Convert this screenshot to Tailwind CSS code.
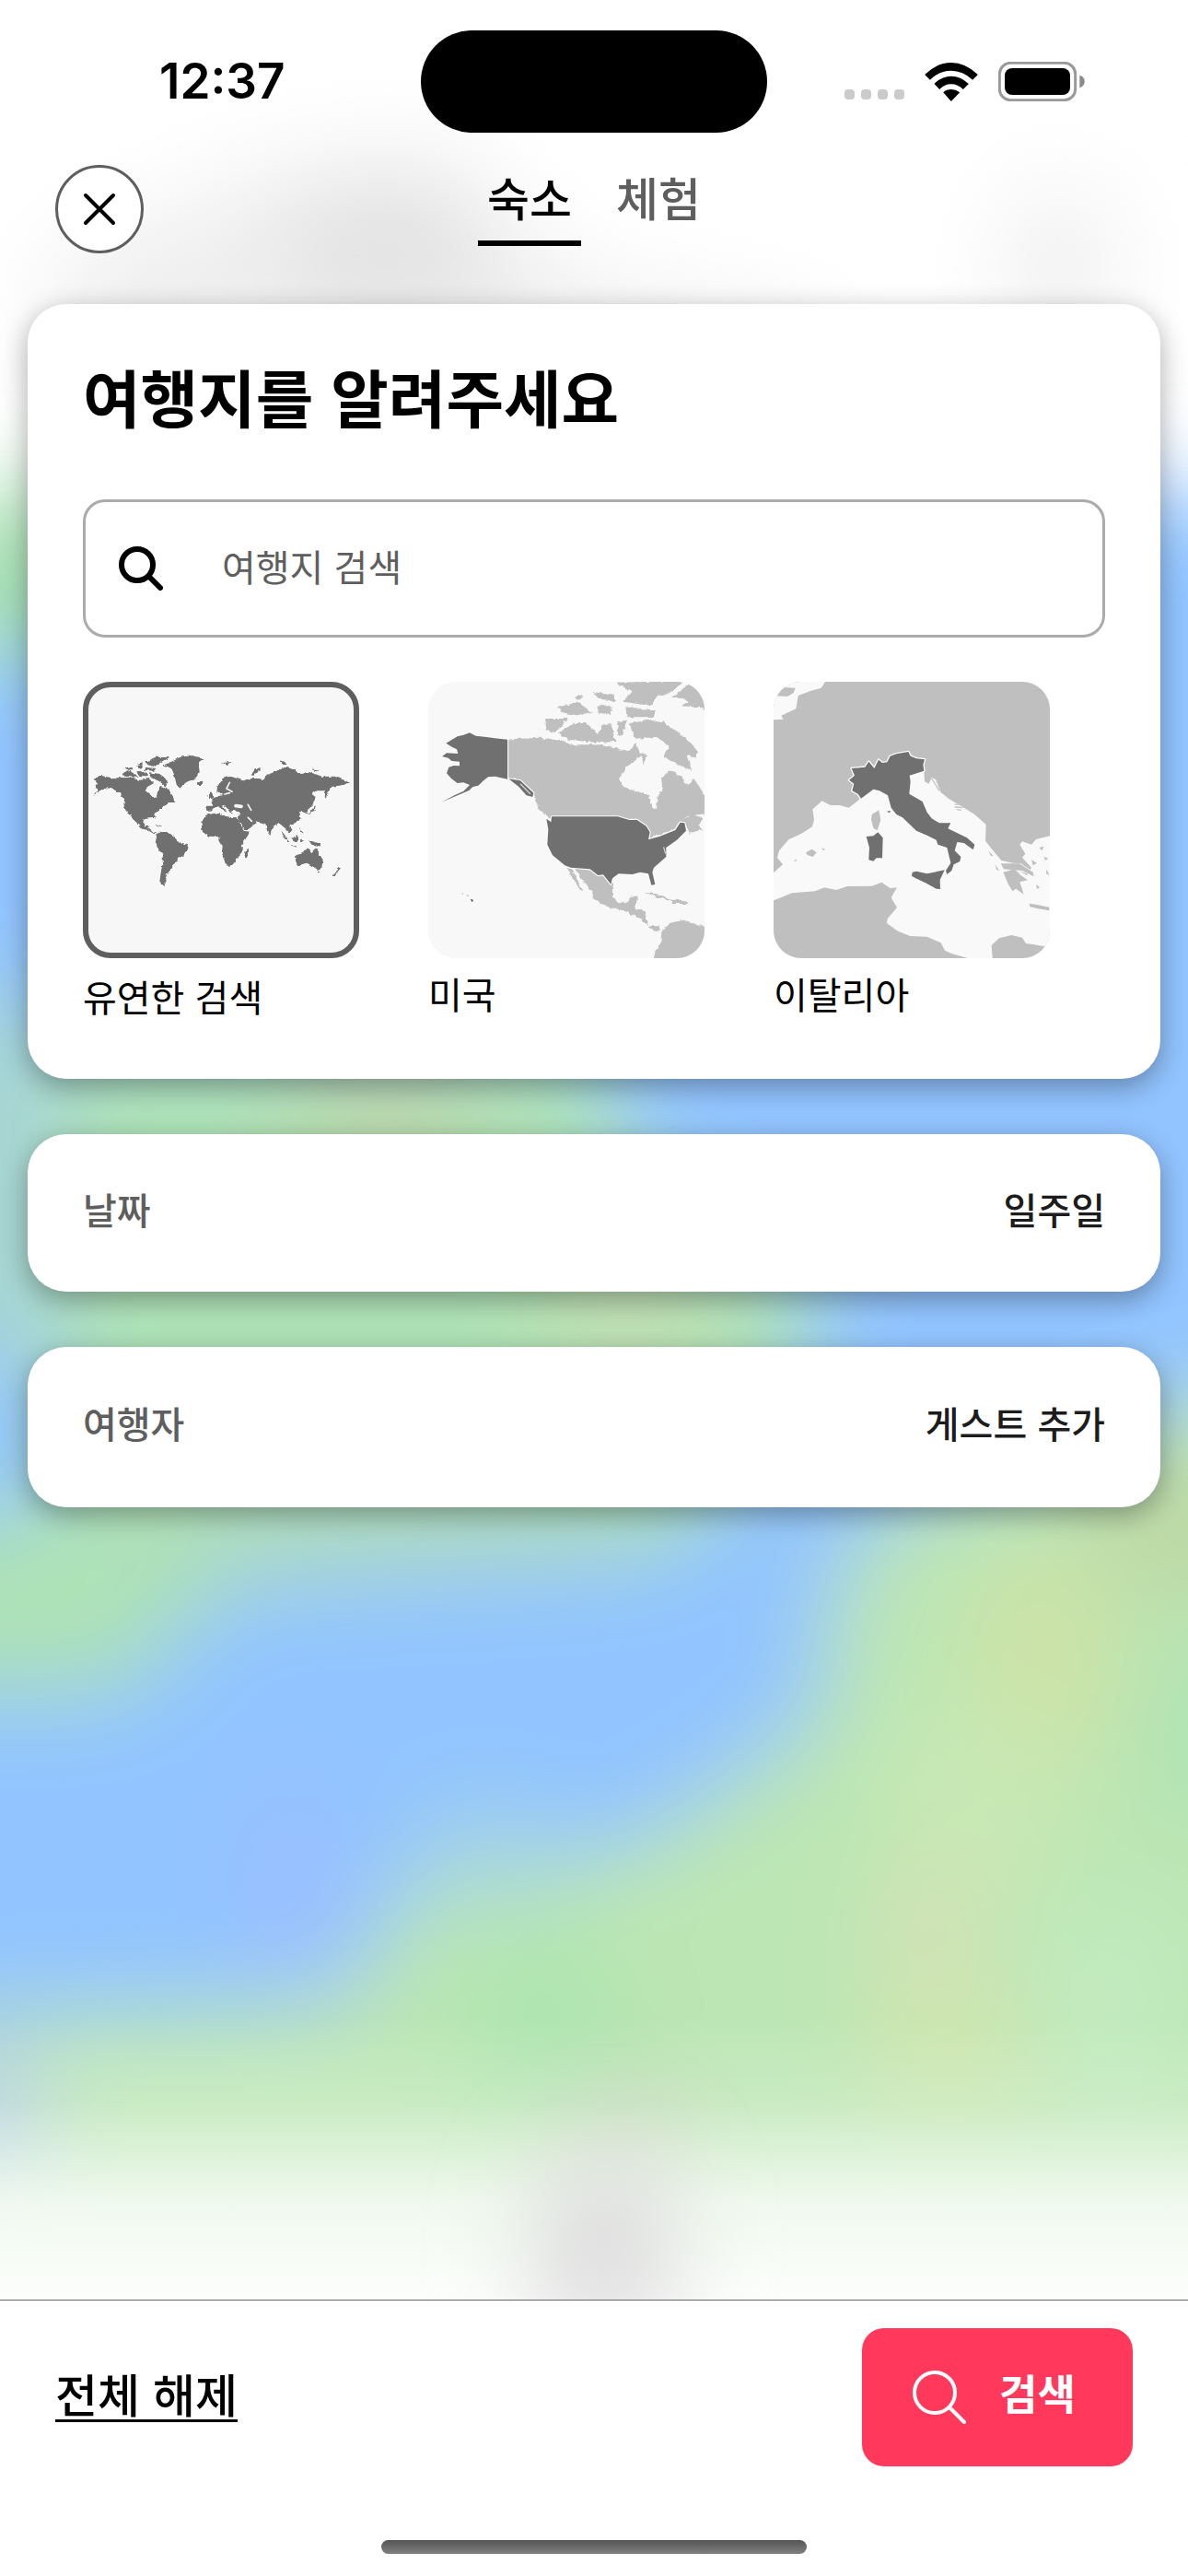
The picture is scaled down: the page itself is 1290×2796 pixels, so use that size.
<!DOCTYPE html>
<html lang="ko">
<head>
<meta charset="utf-8">
<meta name="viewport" content="width=device-width, initial-scale=1">
<title>여행지 검색</title>
<script src="https://cdn.jsdelivr.net/npm/@tailwindcss/browser@4"></script>
</head>
<body class="bg-white font-['Noto_Sans_CJK_KR',sans-serif] text-black">
<div class="relative isolate flex min-h-screen flex-col overflow-hidden">

  <!-- Blurred map backdrop -->
  <svg class="absolute inset-0 -z-10 h-full w-full" viewBox="0 0 1290 2796" preserveAspectRatio="none" aria-hidden="true">
    <defs>
      <filter id="soft" x="-20%" y="-20%" width="140%" height="140%"><feGaussianBlur stdDeviation="50"/></filter>
      <linearGradient id="fade" x1="0" y1="0" x2="0" y2="1">
        <stop offset="0" stop-color="#fff" stop-opacity="0"/>
        <stop offset=".3" stop-color="#fff" stop-opacity=".2"/>
        <stop offset=".65" stop-color="#fff" stop-opacity=".78"/>
        <stop offset="1" stop-color="#fff" stop-opacity=".97"/>
      </linearGradient>
    </defs>
    <rect width="1290" height="2796" fill="#fff"/>
    <g filter="url(#soft)">
      <rect x="-200" y="535" width="1690" height="2100" fill="#92c4ff"/>
      <path fill="#a8e0b4" d="M-200 535H200V715H-200Z"/>
      <path fill="#aee2b6" d="M70 1120H640L700 1280L880 1370L885 1480L760 1660L700 1690L250 1720L130 1840H-200V1700L60 1620L70 1500L-60 1460V1380L60 1340Z"/>
      <path fill="#a6d4d6" d="M-120 1080H70V1480H-120Z"/>
      <path fill="#bce6b4" d="M1490 1490L1250 1530L960 1640L900 1720L890 1860L760 1960L650 2020L560 1990L480 1990L430 2080L370 2170L180 2180L-200 2190V2700H1490Z"/>
      <ellipse cx="530" cy="2010" rx="80" ry="50" fill="#a4d4e4"/>
      <ellipse cx="420" cy="1210" rx="110" ry="90" fill="#bad8ac"/>
      <ellipse cx="680" cy="1430" rx="100" ry="60" fill="#c4deb2"/>
      <ellipse cx="420" cy="1650" rx="280" ry="45" fill="#b0dabf"/>
      <ellipse cx="1130" cy="1810" rx="80" ry="130" fill="#cee2a6"/>
      <ellipse cx="1290" cy="1650" rx="110" ry="90" fill="#bcd8a4"/>
      <ellipse cx="1310" cy="1880" rx="60" ry="90" fill="#ace2b4"/>
      <ellipse cx="1060" cy="1960" rx="100" ry="120" fill="#c8e8b4"/>
      <ellipse cx="1010" cy="2110" rx="60" ry="80" fill="#d6e0b8"/>
      <ellipse cx="1030" cy="2220" rx="90" ry="80" fill="#cee6ae"/>
      <ellipse cx="1210" cy="2170" rx="80" ry="110" fill="#c2ebc0"/>
      <ellipse cx="590" cy="2190" rx="90" ry="100" fill="#aee5b0"/>
      <ellipse cx="320" cy="2050" rx="60" ry="120" fill="#9ac0ff"/>
      <ellipse cx="-30" cy="2300" rx="80" ry="90" fill="#b0cce0"/>
      <ellipse cx="680" cy="2330" rx="70" ry="80" fill="#bfd6b4"/>
    </g>
    <rect y="2190" width="1290" height="310" fill="url(#fade)"/>
    <g filter="url(#soft)">
      <path fill="#efefef" d="M60 280L300 180L480 160L560 250L620 300L900 360V420H60Z"/>
      <ellipse cx="420" cy="270" rx="120" ry="70" fill="#e2e2e2"/>
      <ellipse cx="1150" cy="290" rx="60" ry="90" fill="#f0f0f0"/>
      <ellipse cx="655" cy="2440" rx="80" ry="110" fill="#dedede"/>
    </g>
  </svg>

  <!-- Status bar -->
  <div class="grid grid-cols-[1fr_376px_1fr] items-center pt-[33px]">
    <div class="pl-[173px] font-['Inter',sans-serif] text-[53px] leading-none font-semibold">12:37</div>
    <div class="h-[111px] rounded-full bg-black"></div>
    <div class="flex items-end justify-end gap-[22px] pr-[112px]">
      <div class="flex gap-[7px] pb-[2px]" aria-hidden="true">
        <span class="size-[11px] rounded bg-[#cbcbcb]"></span><span class="size-[11px] rounded bg-[#cbcbcb]"></span><span class="size-[11px] rounded bg-[#cbcbcb]"></span><span class="size-[11px] rounded bg-[#cbcbcb]"></span>
      </div>
      <svg class="h-[42px] w-[58px]" viewBox="311 75 173 126" role="img" aria-label="Wi-Fi">
        <path d="M311 114Q350 75 397 75T484 114L467 131Q435 101 397 101T328 131Z"/>
        <path d="M342 144Q366 119 397 119T454 144L436 162Q419 145 397 145T359 162Z"/>
        <path d="M371 172Q382 162 397 162T425 172L397 201Z"/>
      </svg>
      <svg class="h-[43px] w-[94px]" viewBox="552 75 282 129" role="img" aria-label="배터리">
        <rect x="556" y="79" width="247" height="121" rx="36" fill="#fff" stroke="#999" stroke-width="9"/>
        <rect x="573" y="96" width="213" height="87" rx="24"/>
        <path d="M817 119Q833 123 833 139T817 160Z" fill="#8a8a8a"/>
      </svg>
    </div>
  </div>

  <!-- Header -->
  <header class="grid grid-cols-[1fr_auto_1fr] items-center px-[60px] pt-[35px]">
    <button type="button" aria-label="닫기" class="grid size-24 place-items-center rounded-full border-3 border-[#5e5e5e] bg-white">
      <svg class="size-9" viewBox="0 0 36 36" fill="none" stroke="#000" stroke-width="4" stroke-linecap="round"><path d="M3 3L33 33M33 3L3 33"/></svg>
    </button>
    <nav class="flex h-24 gap-7 text-[50px] leading-[68px] font-medium">
      <a href="#stay" aria-current="page" class="h-[88px] border-b-6 border-black px-[10px]">숙소</a>
      <a href="#experience" class="px-[10px] text-[#5e5e5e]">체험</a>
    </nav>
  </header>

  <main class="flex flex-1 flex-col gap-[60px] px-[30px] pt-[55px]">
    <section class="rounded-[42px] bg-white px-[60px] pt-[58px] pb-16 shadow-[0_9px_30px_rgba(0,0,0,0.33)]">
      <h1 class="text-[68px] leading-[84px] font-bold">여행지를 알려주세요</h1>
      <label class="mt-[70px] flex h-[150px] items-center rounded-3xl border-3 border-[#ababab] pl-9">
        <svg class="mr-16 size-12 shrink-0" viewBox="0 0 48 48" fill="none" stroke="#000" stroke-width="6" stroke-linecap="round" aria-hidden="true"><circle cx="20" cy="20" r="17"/><path d="M33 33L45 45"/></svg>
        <input type="search" aria-label="여행지 검색" placeholder="여행지 검색" class="w-full bg-transparent pr-6 pb-[6px] text-[40px] leading-[60px] outline-none placeholder:text-[#5e5e5e]">
      </label>

      <div class="mt-12 flex gap-[75px] text-[40px] leading-[52px]">
        <button type="button" aria-pressed="true" class="flex w-[300px] flex-col text-left">
          <svg class="size-[300px] rounded-[30px] border-6 border-[#5e5e5e] bg-[#f7f7f7]" viewBox="48 48 864 864" aria-hidden="true">
            <defs>
              <filter id="coast" x="-5%" y="-5%" width="110%" height="110%"><feTurbulence type="fractalNoise" baseFrequency=".06" numOctaves="3" seed="4"/><feDisplacementMap in="SourceGraphic" scale="13" xChannelSelector="R" yChannelSelector="G"/></filter>
            </defs>
            <g filter="url(#coast)" fill="#707070" stroke="#fff" stroke-width="5" stroke-linejoin="round" paint-order="stroke">
              <path d="M66 348L90 336L125 343L180 342L215 350L245 345L262 360L240 372L234 385L250 398L268 408L275 385L278 368L300 372L322 400L328 420L305 420L300 432L280 445L265 460L266 478L262 470L232 474L226 490L232 502L248 500L244 508L258 520L272 524L262 526L240 512L222 508L205 492L190 470L172 455L163 430L165 415L150 395L130 380L108 376L85 386L62 404L80 385L70 372L78 362Z"/>
              <path d="M290 302L330 285L345 275L390 270L425 282L408 295L410 325L400 345L375 355L355 365L348 380L335 365L328 335L320 312Z"/>
              <path d="M160 328L180 320L200 330L212 342L165 338ZM170 310L190 305L195 314L175 318ZM205 300L225 295L222 310L208 312ZM205 325L235 322L240 340L215 340ZM235 290L270 275L312 276L290 290L265 308L240 300ZM230 308L268 312L262 320L232 318ZM245 325L280 330L308 352L300 372L280 355L250 340Z"/>
              <path d="M272 525L285 518L315 525L335 540L338 550L372 560L370 572L360 595L340 605L330 625L318 640L305 655L298 672L300 692L288 690L280 680L284 650L290 620L290 592L275 575L266 555Z"/>
              <path d="M440 462L475 455L482 466L505 470L535 472L555 515L574 518L560 545L548 560L548 585L535 600L520 625L500 630L490 610L482 590L485 565L475 550L475 535L440 533L420 520L415 490L430 465Z"/>
              <path d="M570 575L570 590L562 606L556 600L560 582Z"/>
              <path d="M433 452V434H456L450 412L470 402L485 400L466 388L468 372L487 345L512 338L552 352L575 345L605 345L620 350L625 335L650 325L690 308L718 315L725 328L770 325L810 338L850 338L898 356L880 366L840 372L830 390L822 410L818 405L820 385L790 385L775 395L788 405L778 435L755 452L765 463L750 455L735 452L740 475L722 490L705 495L710 510L703 522L690 508L668 490L650 500L640 528L630 515L625 492L590 484L594 492L562 514L555 512L537 475L540 454L515 450L518 464L505 445L482 432L498 456L478 440L462 438L448 452Z"/>
              <path d="M445 387L458 408L440 412ZM432 402L438 400L436 408ZM400 357L422 356L418 366L404 366ZM482 294L515 291L500 304ZM578 334L590 316L614 308L600 320L586 336ZM668 286L690 290L698 300L682 300ZM775 314L802 315L785 320ZM788 428L786 448L762 464L778 448Z"/>
              <path d="M720 598L745 585L765 572L778 585L790 572L800 590L812 610L808 635L795 642L780 632L760 620L728 628ZM794 648L802 648L797 656ZM862 632L870 640L850 664L846 660L860 646Z"/>
              <path d="M675 515L705 555L698 555L682 532ZM700 560L730 564L724 568ZM710 540L728 528L730 548L716 550ZM736 490L742 510L750 525L742 520ZM738 542L750 544L740 556ZM765 546L800 556L806 566L775 560ZM258 490L290 500L278 500Z"/>
            </g>
            <g fill="none" stroke="#f7f7f7" stroke-linecap="round">
              <path stroke-width="5" d="M508 358L498 378L516 388M492 396L508 392M568 430L578 448M568 472L580 484M252 378L268 402"/>
              <path stroke-width="11" d="M528 434L546 436"/>
            </g>
          </svg>
          <span class="mt-[15px]">유연한 검색</span>
        </button>

        <button type="button" aria-pressed="false" class="flex w-[300px] flex-col text-left">
          <svg class="size-[300px] rounded-[30px] bg-[#f8f8f8]" viewBox="45 30 900 900" aria-hidden="true">
            <g filter="url(#coast)" fill="#bfbfbf">
              <path d="M290 218L405 212L480 222L510 235L600 235L650 245L700 258L720 230L740 270L690 310L668 345L680 372L765 400L775 440H790V405L808 385L805 345L830 318L870 340L890 365L910 345L960 420V458L890 468L860 490L850 510L790 528L765 540L760 515L725 492L668 480H450L405 445L385 390L345 350L290 340Z"/>
              <path d="M700 165L760 155L810 160L850 190L890 215L925 260L915 280L890 270L905 318L860 300L810 275L830 240L790 210L720 215ZM470 195L520 165L560 165L600 200L612 170L640 165L655 225L590 228L500 218ZM430 150L500 150L458 195L425 187ZM655 32L875 28L840 62L790 78L770 108L680 95L710 62ZM688 112L785 122L780 145L692 145ZM870 55L910 28H960V117L870 108L895 92L840 78ZM465 115L530 95L580 130L520 140L490 135ZM580 62L650 75L655 95L600 85ZM660 160L690 155L680 200L664 205ZM595 110L640 105L642 135L600 132ZM520 82L545 72L545 90ZM740 262L760 268L745 300Z"/>
              <path d="M520 635L572 640L612 655L645 685V730L665 752L695 745L705 728H728L720 768L752 775L760 825L795 826L803 842L770 835L735 800L680 775L620 760L582 735L580 715L550 680ZM497 636L512 640L550 710L540 708L515 670ZM805 850L830 815L870 808L960 830V940H778L785 905L800 890ZM748 716L800 722L840 740L800 735ZM835 740L870 740L895 753L840 753ZM868 482L905 462L940 475L925 500L940 510L895 524L890 500Z"/>
            </g>
            <g fill="#707070" stroke="#fafafa" stroke-width="7" stroke-linejoin="round" paint-order="stroke">
              <path d="M180 196L200 206L235 210L262 214L303 218V347L262 338L240 340L225 352L208 368L190 372L178 384L155 394L130 404L88 422L130 400L160 386L180 366L160 358L140 360L120 345L105 328L112 308L128 303L147 304V290L122 288L110 278L90 273L105 262L142 264L138 250L122 242L103 230L140 208L160 203Z"/>
              <path d="M307 346L345 352L388 392L385 405L365 400L340 372Z"/>
              <path d="M430 476L445 487L447 469H662L700 480L725 480L755 500L767 520L762 544L800 533L850 513L866 488L880 490L885 515L855 545L820 570V600L780 635L775 650L784 690L772 692L762 655L735 650L710 657L665 655L645 670L640 689L615 658L598 660L572 640L510 635L490 628L450 595L433 560L436 510Z"/>
            </g>
            <path fill="#555" d="M182 737L192 740L188 748ZM155 719h4v2h-4ZM170 725h6v2h-6Z"/>
            <path fill="none" stroke="#d0d0d0" stroke-width="4" d="M345 362L378 396M812 568L818 590"/>
          </svg>
          <span class="mt-3">미국</span>
        </button>

        <button type="button" aria-pressed="false" class="flex w-[300px] flex-col text-left">
          <svg class="size-[300px] rounded-[30px] bg-[#bfbfbf]" viewBox="60 30 900 900" aria-hidden="true">
            <path fill="#f9f9f9" d="M60 30H228L215 50L180 60L140 75L133 118L85 140L92 152L60 154Z"/>
            <path fill="#bfbfbf" d="M68 76L90 48L131 50L125 66L105 78Z"/>
            <path fill="#f9f9f9" d="M60 652L90 625L72 603L78 580L110 543L150 525L186 502L192 480L187 445L218 418L245 432L275 432L305 440L325 425L345 408L385 380L430 400L500 450L502 335L550 318L552 355L566 362L575 342L592 350L605 390L630 410L680 440L715 462L752 495L750 548L775 580L802 612L840 620L865 622L905 648L905 662L860 645L885 660L900 635L870 602L880 590L862 560L870 550L900 560L915 543L960 532V895L905 885L882 882L870 863L835 855L795 865L770 888L773 930H692L640 915L618 905L605 880L560 860L505 858L465 842L428 815L432 800L462 765L443 733L462 700L440 702L412 683L380 695L300 696L265 708L225 700L195 712L120 718L85 732L60 742Z"/>
            <path fill="#bfbfbf" d="M403 448L409 480L398 514L386 508L378 480L380 462ZM165 586L185 575L200 586L188 600L170 594ZM216 571L228 575L222 580ZM808 650L845 640L865 660L888 676L862 682L875 722L850 704L838 712L825 690ZM893 752L915 755L958 764V775L930 770L895 763ZM800 622L860 622L905 650L908 664L870 645L810 640ZM760 580L775 596L768 598ZM782 625L795 645L786 642ZM925 570L940 566L935 580ZM940 600L955 605L945 612ZM915 690L928 700L918 704ZM950 640L958 660L948 655ZM900 610L918 620L905 628Z"/>
            <path fill="none" stroke="#c4c4c4" stroke-width="4" d="M575 345L600 385M590 350L608 392M650 430L668 428M650 438L676 440M656 446L672 448M128 614L135 610"/>
            <g fill="#707070">
              <path stroke="#fbfbfb" stroke-width="8" stroke-linejoin="round" paint-order="stroke" d="M345 410L335 395L316 385L322 362L306 350L324 335L314 312L358 308L370 290L388 312L402 284L414 294L430 292L440 272L460 265L499 258L506 272L525 280L552 283L547 300L550 320L503 335L506 355L502 395L545 420L560 455L575 475L600 490L637 490L628 508L690 538L715 560L710 577L680 555L658 552L650 580L670 600L667 615L647 625L640 645L625 657L621 645L637 620L625 570L595 560L590 545L560 530L525 515L480 472L460 462L443 440L432 400L405 385L385 380L365 395Z"/>
              <path d="M362 534L385 532L400 520L416 538L414 604L395 604L385 614L370 610L372 570ZM512 650L525 647L560 655L617 643L602 675L603 705L590 704L555 685L520 668L510 662ZM428 452L441 450L438 457Z"/>
            </g>
          </svg>
          <span class="mt-3">이탈리아</span>
        </button>
      </div>
    </section>

    <button type="button" class="flex h-[171px] items-center justify-between rounded-[42px] bg-white px-[60px] pb-[10px] text-[40px] leading-[60px] font-medium shadow-[0_9px_30px_rgba(0,0,0,0.33)]">
      <span class="text-[#5e5e5e]">날짜</span><span class="text-[#1c1c1c]">일주일</span>
    </button>
    <button type="button" class="flex h-[174px] items-center justify-between rounded-[42px] bg-white px-[60px] pb-[10px] text-[40px] leading-[60px] font-medium shadow-[0_9px_30px_rgba(0,0,0,0.33)]">
      <span class="text-[#5e5e5e]">여행자</span><span class="text-[#1c1c1c]">게스트 추가</span>
    </button>
  </main>

  <footer class="border-t border-[#666] bg-white px-[60px] pt-[30px] pb-6">
    <div class="flex items-center justify-between">
      <a href="#reset" class="pb-[10px] text-[50px] leading-[76px] font-medium underline decoration-3 underline-offset-[7px]">전체 해제</a>
      <button type="button" class="flex h-[150px] w-[294px] items-center rounded-3xl bg-[#ff385c] pl-[55px] text-[45px] leading-[66px] font-bold text-white">
        <svg class="mr-9 size-[58px]" viewBox="0 0 58 58" fill="none" stroke="#fff" stroke-width="4" stroke-linecap="round" aria-hidden="true"><circle cx="24" cy="24" r="22"/><path d="M41 41L56 56"/></svg>
        <span class="pb-[10px]">검색</span>
      </button>
    </div>
    <div class="mx-auto mt-20 h-[15px] w-[462px] rounded-full bg-linear-to-b from-[#555] to-[#808080]"></div>
  </footer>
</div>
</body>
</html>
